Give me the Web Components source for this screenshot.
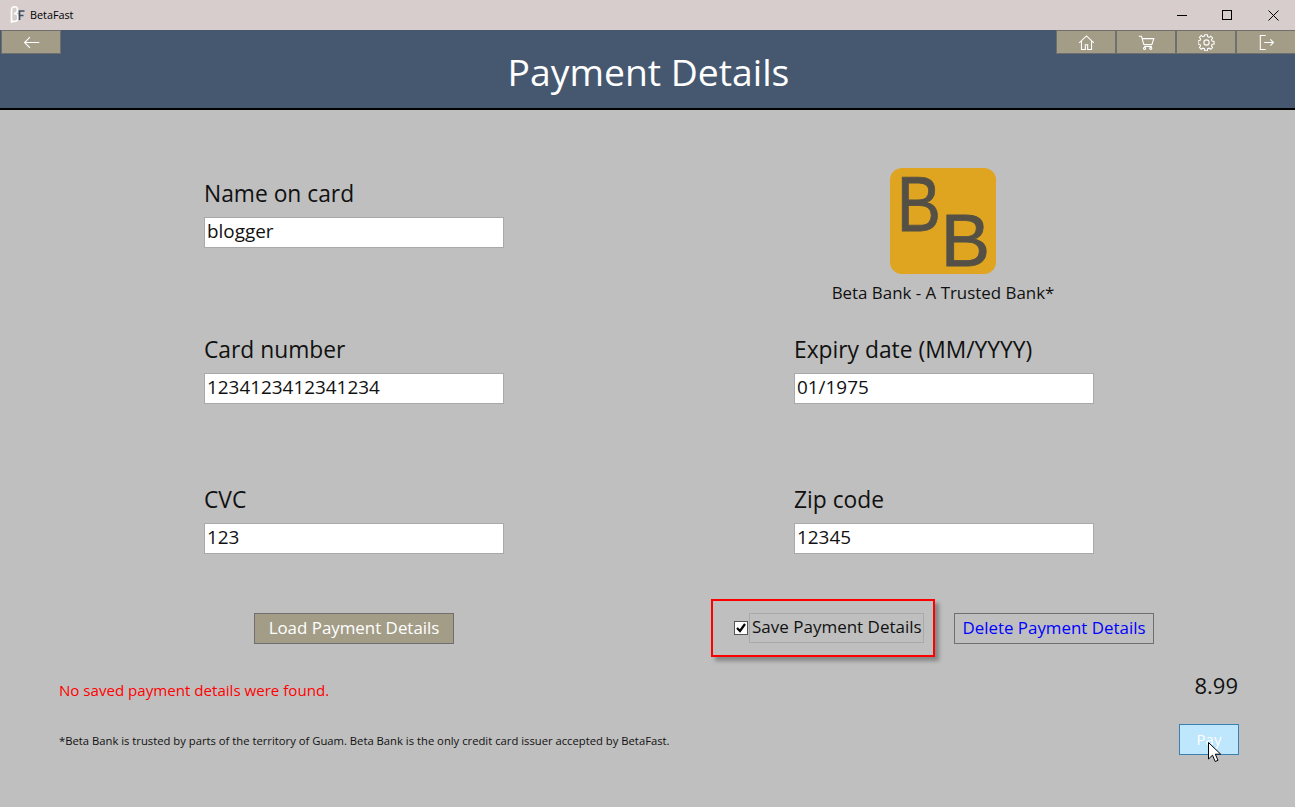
<!DOCTYPE html>
<html>
<head>
<meta charset="utf-8">
<title>BetaFast</title>
<style>
  html, body { margin: 0; height: 100%; }
  body { font-family: "Open Sans", "Noto Sans", sans-serif; color: #111; background: #bfbfbf; overflow: hidden; }
</style>
</head>
<body>
<bf-app>
  <bf-titlebar slot="titlebar">BetaFast</bf-titlebar>
  <bf-header slot="header">Payment Details</bf-header>
  <bf-payment-form slot="form"></bf-payment-form>
</bf-app>

<script>
const ICONS = {
  back: '<path d="M21 11H2M9 4l-7 7 7 7"/>',
  home: '<path d="M1.500 11.500 11 2.500l9.500 9M4.500 9.500V20h5v-6h3v6h5V9.500"/>',
  cart: '<path d="M1 3h3.500l3 10.500h10.500L20.500 6H5.500M8 16h10"/><circle cx="8.500" cy="18.500" r="1.400"/><circle cx="16.500" cy="18.500" r="1.400"/>',
  gear: '<circle cx="11" cy="11" r="3.400"/><path d="M9.400 1.500h3.200l.5 2.600 1.900.8 2.200-1.500 2.300 2.300-1.500 2.200.8 1.900 2.600.5v3.200l-2.600.5-.8 1.900 1.500 2.200-2.300 2.300-2.200-1.500-1.900.8-.5 2.600H9.400l-.5-2.600-1.900-.8-2.200 1.500-2.300-2.300 1.500-2.200-.8-1.900-2.600-.5V9.400l2.600-.5.8-1.900-1.500-2.200 2.300-2.300 2.200 1.500 1.900-.8z" transform="translate(-.6 -.6)"/>',
  exit: '<path d="M10 2H3v18h7M8 11h12M16 7l4 4-4 4"/>'
};

class BfApp extends HTMLElement {
  constructor() {
    super();
    this.attachShadow({ mode: "open" });
    this.shadowRoot.innerHTML = `
      <style>
        :host { display: flex; flex-direction: column; width: 1295px; height: 807px; background: #bfbfbf; }
      </style>
      <slot name="titlebar"></slot>
      <slot name="header"></slot>
      <slot name="form"></slot>
    `;
  }
}

class BfTitlebar extends HTMLElement {
  constructor() {
    super();
    this.attachShadow({ mode: "open" });
    this.shadowRoot.innerHTML = `
      <style>
        :host { display: flex; align-items: center; height: 30px; margin-right: -1px; background: #d6cdcc; font-size: 10.800px; color: #000; }
        .logo { width: 16px; height: 18px; margin: 0 5px 0 9px; flex: none; }
        .title { flex: 1; padding-bottom: 1px; }
        .ctl { width: 45.500px; height: 30px; display: flex; align-items: center; justify-content: center; }
        svg { display: block; }
      </style>
      <svg class="logo" viewBox="0 0 16 18" fill="none">
        <path d="M2.500 17V4.500C2.500 1.500 4 .8 5.500 .8 7.500 .8 8.500 2.500 8.500 4 8.500 6 7 7.300 5 7.500 7.500 7.500 9 9.500 9 11.500 9 14 7.300 15.500 5.300 15.500 4 15.500 3 15 2.500 14.300" stroke="#fff" stroke-width="1.600"/>
        <path d="M10.500 14V5H15.500M10.500 9.500H14.500" stroke="#3f4d63" stroke-width="1.700"/>
      </svg>
      <span class="title"><slot></slot></span>
      <span class="ctl"><svg width="11" height="11"><path d="M0 5.500h10" stroke="#000"/></svg></span>
      <span class="ctl"><svg width="11" height="11"><rect x=".5" y=".5" width="9" height="9" fill="none" stroke="#000"/></svg></span>
      <span class="ctl"><svg width="11" height="11"><path d="M.5.5l10 10M10.500.5l-10 10" stroke="#000"/></svg></span>
    `;
  }
}

class BfNavButton extends HTMLElement {
  constructor() {
    super();
    this.attachShadow({ mode: "open" });
    const icon = ICONS[this.getAttribute("icon")];
    this.shadowRoot.innerHTML = `
      <style>
        :host { display: flex; align-items: center; justify-content: center; box-sizing: border-box; width: 60px; height: 24px; background: #a39d88; border: 1px solid #6f6f6f; }
        svg { width: 17px; height: 17px; fill: none; stroke: #fff; stroke-width: 1.400; }
      </style>
      <svg viewBox="0 0 22 22">${icon}</svg>
    `;
  }
}

class BfHeader extends HTMLElement {
  constructor() {
    super();
    this.attachShadow({ mode: "open" });
    this.shadowRoot.innerHTML = `
      <style>
        :host { display: grid; height: 80px; box-sizing: border-box; background: #465870; border-bottom: 2px solid #000; color: #fff; }
        .nav, h1 { grid-area: 1 / 1; }
        .nav { display: flex; justify-content: space-between; align-items: flex-start; }
        .group { display: flex; margin-right: -1px; }
        .left { margin-left: 1px; }
        h1 { margin: 6px 0 0 2px; align-self: center; text-align: center; font-size: 37.300px; font-weight: 400; line-height: 48px; }
      </style>
      <h1><slot></slot></h1>
      <div class="nav">
        <div class="group left"><bf-nav-button icon="back"></bf-nav-button></div>
        <div class="group">
          <bf-nav-button icon="home"></bf-nav-button>
          <bf-nav-button icon="cart"></bf-nav-button>
          <bf-nav-button icon="gear"></bf-nav-button>
          <bf-nav-button icon="exit"></bf-nav-button>
        </div>
      </div>
    `;
  }
}

class BfField extends HTMLElement {
  constructor() {
    super();
    this.attachShadow({ mode: "open" });
    this.shadowRoot.innerHTML = `
      <style>
        :host { display: block; width: 300px; }
        label { display: block; height: 37px; font-size: 22.800px; line-height: 27px; color: #111; white-space: nowrap; }
        .box { box-sizing: border-box; height: 31px; padding: 0 2px; background: #fff; border: 1px solid #a9a9a9; font-size: 18.900px; line-height: 27px; color: #111; white-space: nowrap; }
      </style>
      <label>${this.getAttribute("label")}</label>
      <div class="box" role="textbox"><slot></slot></div>
    `;
  }
}

class BfBankLogo extends HTMLElement {
  constructor() {
    super();
    this.attachShadow({ mode: "open" });
    this.shadowRoot.innerHTML = `
      <style>
        :host { display: flex; flex-direction: column; align-items: center; width: 298px; }
        .tile { display: grid; grid-template-rows: 53px 53px; box-sizing: border-box; width: 106px; height: 106px; padding: 0 6px 0 6px; background: #dfa521; border-radius: 12px; color: #545046; font-family: "Liberation Sans", sans-serif; font-size: 77px; line-height: 53px; -webkit-text-stroke: .8px #545046; }
        .b1 { justify-self: start; margin-top: 10px; transform: scaleX(.86); transform-origin: 5px 0; }
        .b2 { justify-self: end; margin-top: -7px; font-size: 74px; }
        p { margin: 8px 0 0; font-size: 16.900px; line-height: 22px; white-space: nowrap; color: #111; }
      </style>
      <div class="tile"><span class="b1">B</span><span class="b2">B</span></div>
      <p><slot></slot></p>
    `;
  }
}

class BfButton extends HTMLElement {
  constructor() {
    super();
    this.attachShadow({ mode: "open" });
    this.shadowRoot.innerHTML = `
      <style>
        :host { display: flex; align-items: center; justify-content: center; box-sizing: border-box; width: 200px; height: 31px; padding-bottom: 2px; border: 1px solid #6f6f6f; font-size: 16.900px; white-space: nowrap; background: transparent; color: #0000ff; }
        :host([variant="solid"]) { background: #a39d88; color: #fff; }
        :host([variant="hover"]) { width: 60px; background: #bee6fd; border-color: #3c7fb1; color: #fff; font-size: 15px; }
      </style>
      <slot></slot>
    `;
  }
}

class BfSaveOption extends HTMLElement {
  constructor() {
    super();
    this.attachShadow({ mode: "open" });
    this.shadowRoot.innerHTML = `
      <style>
        :host { display: flex; align-items: center; box-sizing: border-box; width: 224px; height: 58px; padding: 0 9px 0 21px; border: 2px solid #f00; box-shadow: 4px 4px 4px rgba(0,0,0,.3); }
        .check { box-sizing: border-box; width: 14px; height: 14px; margin-right: 1px; background: #fff; border: 1px solid #555; flex: none; }
        .check svg { display: block; width: 12px; height: 12px; fill: none; stroke: #000; stroke-width: 2.200; }
        .text { box-sizing: border-box; display: flex; align-items: center; height: 30px; padding: 0 0 3px 2px; flex: 1; margin-bottom: 1px; border: 1px solid #a9a9ad; font-size: 17px; white-space: nowrap; color: #111; }
      </style>
      <span class="check"><svg viewBox="0 0 12 12"><path d="M2 6l3 3 5-7"/></svg></span>
      <span class="text"><slot></slot></span>
    `;
  }
}

class BfPaymentForm extends HTMLElement {
  constructor() {
    super();
    this.attachShadow({ mode: "open" });
    this.shadowRoot.innerHTML = `
      <style>
        :host { display: block; position: relative; flex: 1; }
        .fields { display: grid; grid-template-columns: 590px 300px; grid-template-rows: 168px 150px 113px; padding: 58px 0 0 204px; }
        .first { padding-top: 12px; }
        .actions { display: flex; align-items: center; padding-left: 254px; }
        .actions bf-save-option { margin: 0 19px 0 257px; }
        .bottom { display: grid; grid-template-columns: 1fr auto; padding: 0 57px 0 59px; }
        .msg { color: #f00; font-size: 15.100px; line-height: 22px; margin-top: 22px; }
        .price { font-size: 22px; line-height: 30px; text-align: right; margin-top: 13px; }
        .note { margin-top: 25px; align-self: center; font-size: 11.260px; color: #111; }
        .pay { margin: 23px -1px 0 0; }
        .cursor { position: absolute; left: 1208px; top: 632px; width: 13px; height: 21px; }
      </style>
      <div class="fields">
        <div class="first"><bf-field label="Name on card">blogger</bf-field></div>
        <bf-bank-logo>Beta Bank - A Trusted Bank*</bf-bank-logo>
        <bf-field label="Card number">1234123412341234</bf-field>
        <bf-field label="Expiry date (MM/YYYY)">01/1975</bf-field>
        <bf-field label="CVC">123</bf-field>
        <bf-field label="Zip code">12345</bf-field>
      </div>
      <div class="actions">
        <bf-button variant="solid">Load Payment Details</bf-button>
        <bf-save-option>Save Payment Details</bf-save-option>
        <bf-button>Delete Payment Details</bf-button>
      </div>
      <div class="bottom">
        <div class="msg">No saved payment details were found.</div>
        <div class="price">8.99</div>
        <div class="note">*Beta Bank is trusted by parts of the territory of Guam. Beta Bank is the only credit card issuer accepted by BetaFast.</div>
        <bf-button class="pay" variant="hover">Pay</bf-button>
      </div>
      <svg class="cursor" viewBox="0 0 13 21"><path d="M.5.5v16.500l4-3.800 2.700 6.300 2.800-1.200-2.700-6.100h5.400z" fill="#fff" stroke="#000"/></svg>
    `;
  }
}

customElements.define("bf-app", BfApp);
customElements.define("bf-titlebar", BfTitlebar);
customElements.define("bf-nav-button", BfNavButton);
customElements.define("bf-header", BfHeader);
customElements.define("bf-field", BfField);
customElements.define("bf-bank-logo", BfBankLogo);
customElements.define("bf-button", BfButton);
customElements.define("bf-save-option", BfSaveOption);
customElements.define("bf-payment-form", BfPaymentForm);
</script>
</body>
</html>
